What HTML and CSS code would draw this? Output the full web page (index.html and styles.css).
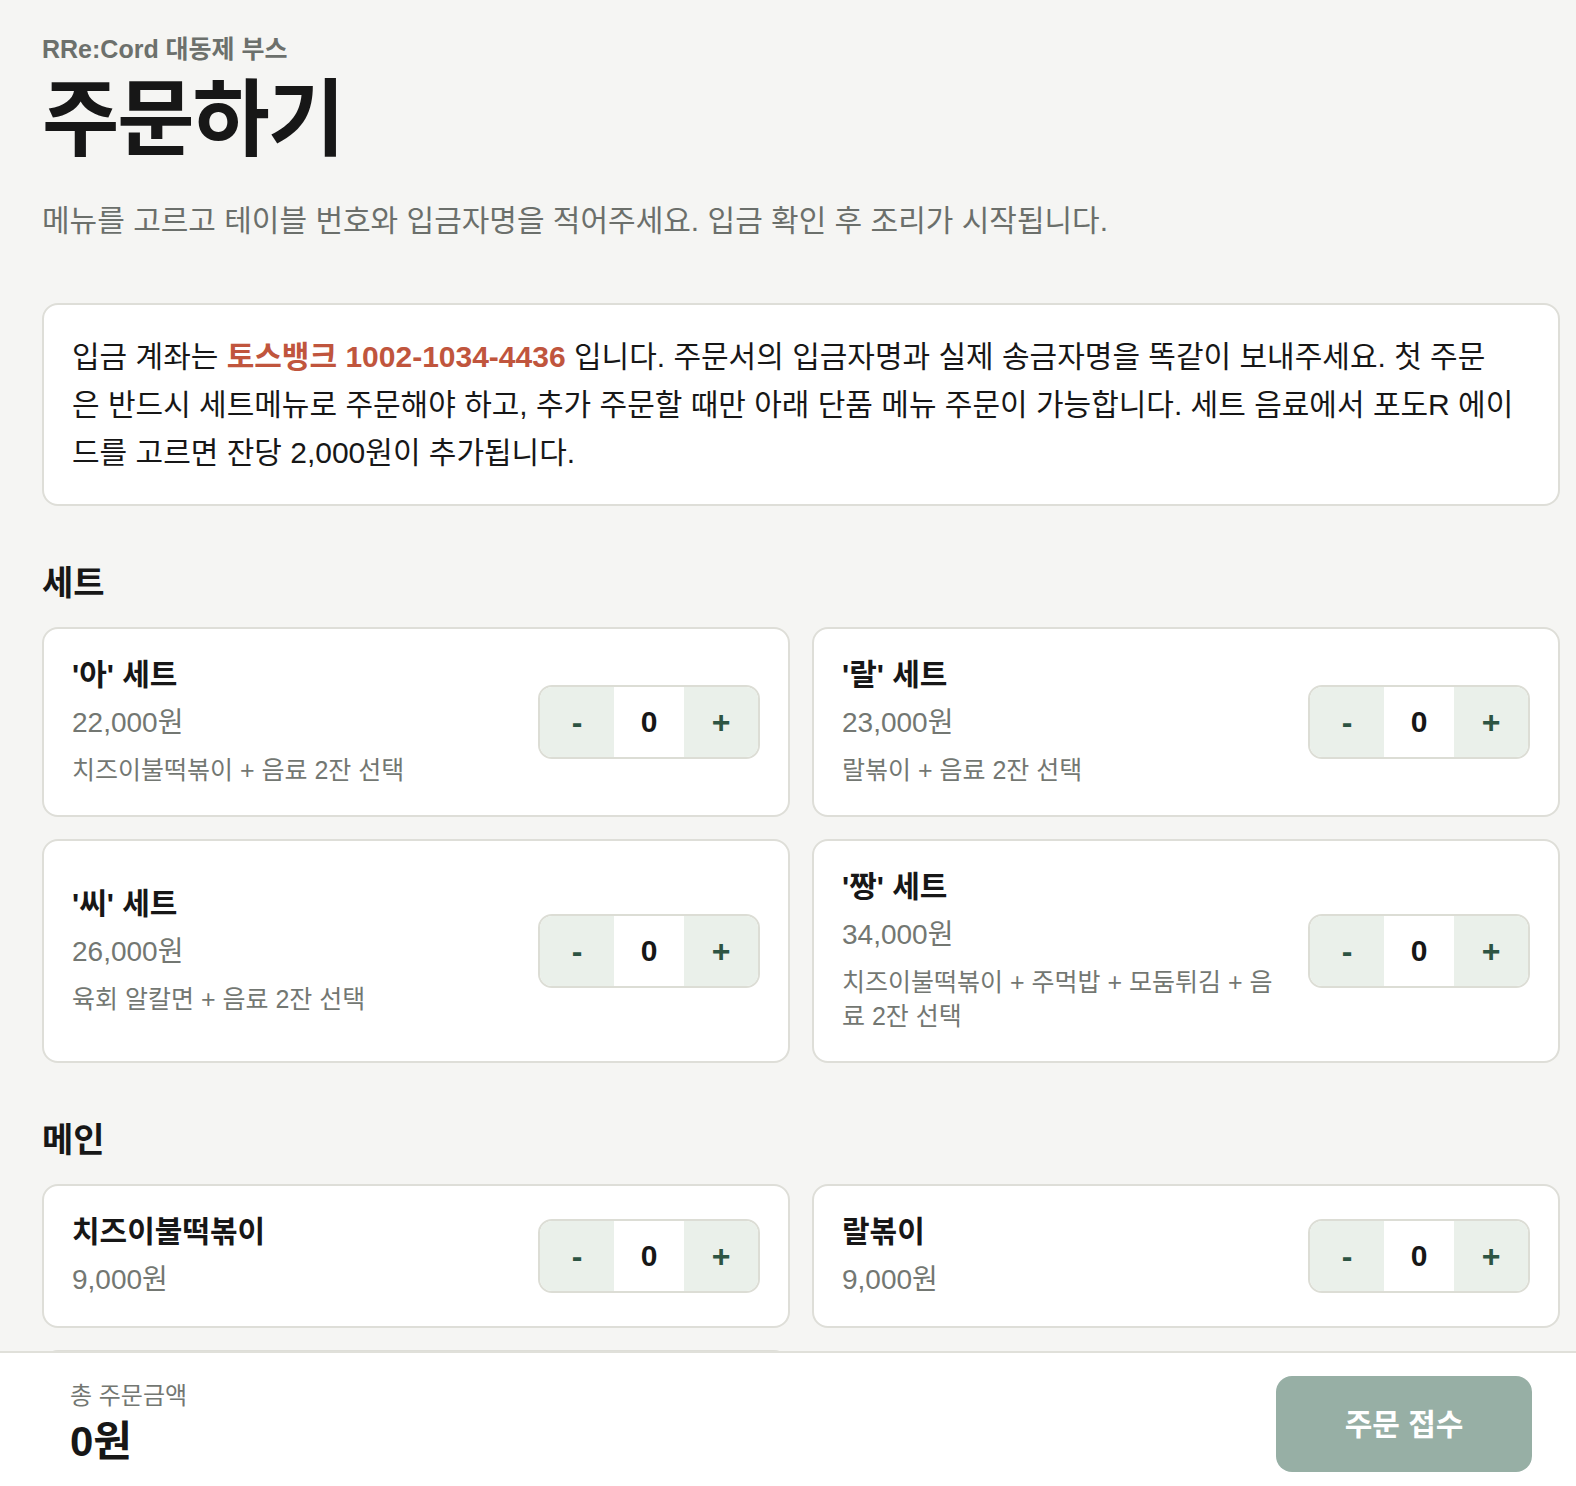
FILE: index.html
```html
<html>
<head>
<title>주문하기 - RRe:Cord 대동제 부스</title>
<meta charset="utf-8"/>
<meta name="viewport" content="width=device-width, initial-scale=1"/>
<link rel="stylesheet" href="styles.css">
</head>

<body>

<div id="page">
  <div class="head">
    <div class="eyebrow">RRe:Cord 대동제 부스</div>
    <h1>주문하기</h1>
    <p class="lead">메뉴를 고르고 테이블 번호와 입금자명을 적어주세요. 입금 확인 후 조리가 시작됩니다.</p>
  </div>

  <div class="notice">
    입금 계좌는 <b class="account">토스뱅크 1002-1034-4436</b> 입니다. 주문서의 입금자명과 실제 송금자명을 똑같이 보내주세요. 첫 주문<br>은 반드시 세트메뉴로 주문해야 하고, 추가 주문할 때만 아래 단품 메뉴 주문이 가능합니다. 세트 음료에서 포도R 에이<br>드를 고르면 잔당 2,000원이 추가됩니다.
  </div>

  <h2>세트</h2>
  <div class="menu">
    <div class="item">
      <div class="info">
        <div class="name">'아' 세트</div>
        <div class="price">22,000원</div>
        <div class="desc">치즈이불떡볶이 + 음료 2잔 선택</div>
      </div>
      <div class="qty"><button>-</button><span>0</span><button>+</button></div>
    </div>
    <div class="item">
      <div class="info">
        <div class="name">'랄' 세트</div>
        <div class="price">23,000원</div>
        <div class="desc">랄볶이 + 음료 2잔 선택</div>
      </div>
      <div class="qty"><button>-</button><span>0</span><button>+</button></div>
    </div>
    <div class="item">
      <div class="info">
        <div class="name">'씨' 세트</div>
        <div class="price">26,000원</div>
        <div class="desc">육회 알칼면 + 음료 2잔 선택</div>
      </div>
      <div class="qty"><button>-</button><span>0</span><button>+</button></div>
    </div>
    <div class="item">
      <div class="info">
        <div class="name">'짱' 세트</div>
        <div class="price">34,000원</div>
        <div class="desc">치즈이불떡볶이 + 주먹밥 + 모둠튀김 + 음료 2잔 선택</div>
      </div>
      <div class="qty"><button>-</button><span>0</span><button>+</button></div>
    </div>
  </div>

  <h2>메인</h2>
  <div class="menu">
    <div class="item">
      <div class="info">
        <div class="name">치즈이불떡볶이</div>
        <div class="price">9,000원</div>
      </div>
      <div class="qty"><button>-</button><span>0</span><button>+</button></div>
    </div>
    <div class="item">
      <div class="info">
        <div class="name">랄볶이</div>
        <div class="price">9,000원</div>
      </div>
      <div class="qty"><button>-</button><span>0</span><button>+</button></div>
    </div>
    <div class="item">
      <div class="info">
        <div class="name">육회 알칼면</div>
        <div class="price">12,000원</div>
      </div>
      <div class="qty"><button>-</button><span>0</span><button>+</button></div>
    </div>
  </div>
</div>

<div id="bar">
  <div class="bar-in">
    <div class="total">
      <div class="total-label">총 주문금액</div>
      <div class="total-sum">0원</div>
    </div>
    <button class="submit" disabled>주문 접수</button>
  </div>
</div>

</body>
</html>
```

FILE: styles.css
```css
html, body {margin:0; padding:0;}
body {
 color: #171717;
 background: #f5f5f3;
 font: normal 30px/40px "Liberation Sans", "Noto Sans CJK KR", sans-serif;
}

#page {margin: 0 16px 0 42px; padding: 33px 0 200px;}

.eyebrow {
 font-size: 25px;
 line-height: 32px;
 font-weight: bold;
 color: #6c706c;
}
h1 {
 margin: 11px 0 0;
 font-size: 84px;
 line-height: 88px;
 letter-spacing: -2px;
 font-weight: bold;
}
.lead {
 margin: 37px 0 0;
 color: #6b6f6b;
 line-height: 40px;
}

.notice {
 margin-top: 62px;
 padding: 28px 28px 27px;
 background: white;
 border: 2px solid #deded8;
 border-radius: 16px;
 line-height: 48px;
}
.notice .account {color: #c0553d;}

h2 {
 margin: 55px 0 22px;
 font-size: 34px;
 line-height: 44px;
 font-weight: bold;
}

.menu {
 display: grid;
 grid-template-columns: 1fr 1fr;
 gap: 22px;
}
.item {
 display: flex;
 align-items: center;
 justify-content: space-between;
 gap: 30px;
 padding: 28px;
 background: white;
 border: 2px solid #deded8;
 border-radius: 16px;
}
.info {flex: 1; min-width: 0;}
.name {font-weight: bold; line-height: 36px;}
.price {margin-top: 12px; font-size: 28px; line-height: 36px; color: #737772;}
.desc {margin-top: 12px; font-size: 25px; line-height: 34px; color: #737772;}

.qty {
 display: flex;
 flex: none;
 border: 2px solid #dcddd5;
 border-radius: 14px;
 overflow: hidden;
}
.qty button {
 width: 74px;
 height: 70px;
 margin: 0;
 padding: 0;
 border: 0;
 background: #eaf0ea;
 color: #2d5443;
 font: bold 32px/70px "Liberation Sans", sans-serif;
}
.qty span {
 width: 70px;
 text-align: center;
 background: white;
 font-size: 30px;
 line-height: 70px;
 font-weight: bold;
}

/* bottom order bar stays over the list */
#bar {
 position: fixed;
 left: 0; right: 0; bottom: 0;
 background: white;
 border-top: 2px solid #e0e0da;
}
.bar-in {
 display: flex;
 align-items: center;
 justify-content: space-between;
 margin: 0 16px 0 42px;
 padding: 23px 28px 14px;
}
.total-label {font-size: 24px; line-height: 32px; color: #737772;}
.total-sum {margin-top: 4px; font-size: 42px; line-height: 52px; font-weight: bold;}
.submit {
 width: 256px;
 height: 96px;
 border: 0;
 border-radius: 16px;
 background: #97afa5;
 color: white;
 font: bold 30px/96px "Liberation Sans", "Noto Sans CJK KR", sans-serif;
}
```
